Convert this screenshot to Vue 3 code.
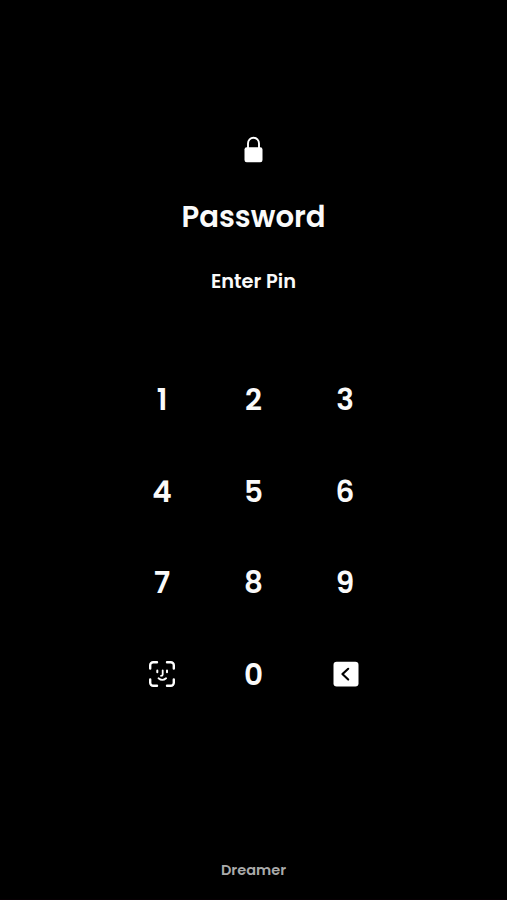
<script setup>
const keys = ['1', '2', '3', '4', '5', '6', '7', '8', '9', 'face', '0', 'back']
</script>

<template>
  <main class="screen">
    <header class="intro">
      <svg class="lock" viewBox="0.5 0 19 28" aria-hidden="true">
        <path d="M4.5 13V7.5a5.5 5.8 0 0 1 11 0V13" fill="none" stroke="#fff" stroke-width="1.9" />
        <rect x="1" y="11.3" width="18" height="15" rx="2.2" fill="#fff" />
      </svg>
      <h1 class="title">Password</h1>
      <p class="prompt">Enter Pin</p>
    </header>

    <section class="keypad">
      <button v-for="key in keys" :key="key" class="key" type="button">
        <svg v-if="key === 'face'" class="icon" viewBox="0 0 28 28" fill="none" stroke="#fff" stroke-linecap="round" aria-hidden="true">
          <path d="M2.2 8.5V5.2a3 3 0 0 1 3-3H9M19 2.2h3.8a3 3 0 0 1 3 3v3.3M25.8 19.5v3.3a3 3 0 0 1-3 3H19M9 25.8H5.2a3 3 0 0 1-3-3v-3.3" stroke-width="2.4" />
          <path d="M9.3 10.5v1.8M19 10.5v1.8" stroke-width="2" />
          <path d="M14.7 10.3v4.2q0 1.3-1.7 1.3M10.5 18.3q3.8 3.2 7.6 0" stroke-width="1.8" />
        </svg>
        <svg v-else-if="key === 'back'" class="icon back" viewBox="0 0 28 28" fill="none" aria-hidden="true">
          <rect x="1.5" y="1.8" width="25" height="24.7" rx="3.2" fill="#fff" />
          <path d="M16.2 8.8l-5.8 5.3 5.8 5.5" stroke="#000" stroke-width="2.1" stroke-linecap="round" stroke-linejoin="round" />
        </svg>
        <span v-else class="digit">{{ key }}</span>
      </button>
    </section>

    <footer class="brand">Dreamer</footer>
  </main>
</template>

<style>
body {
  background: #000;
}
</style>

<style scoped>
.screen {
  box-sizing: border-box;
  display: flex;
  flex-direction: column;
  align-items: center;
  height: 900px;
  padding: 136px 0 18px;
  background: #000;
  color: #fafafa;
  font-family: Poppins, Inter, sans-serif;
  font-weight: 600;
  border-bottom: 1px solid #080004;
}
.intro {
  display: flex;
  flex-direction: column;
  align-items: center;
  width: 100%;
}
.lock {
  display: block;
  width: 19px;
  height: 28px;
}
.title {
  margin: 33px 0 0;
  font-size: 29.2px;
  line-height: 40px;
  font-weight: 600;
}
.prompt {
  margin: 29px 0 0;
  font-size: 19.4px;
  line-height: 31px;
}
.keypad {
  display: grid;
  grid-template-columns: repeat(3, 91.5px);
  grid-auto-rows: 91.6px;
  margin-top: 56.5px;
}
.key {
  display: flex;
  align-items: center;
  justify-content: center;
  padding: 0;
  border: 0;
  background: none;
  color: inherit;
  font: inherit;
}
.digit {
  padding-top: 1.4px;
  font-size: 29.5px;
  line-height: 40px;
}
.icon {
  width: 28px;
  height: 28px;
}
.back {
  margin-left: 1px;
}
.brand {
  margin-top: auto;
  color: #aaa;
  font-size: 14.5px;
  line-height: 22px;
}
</style>
